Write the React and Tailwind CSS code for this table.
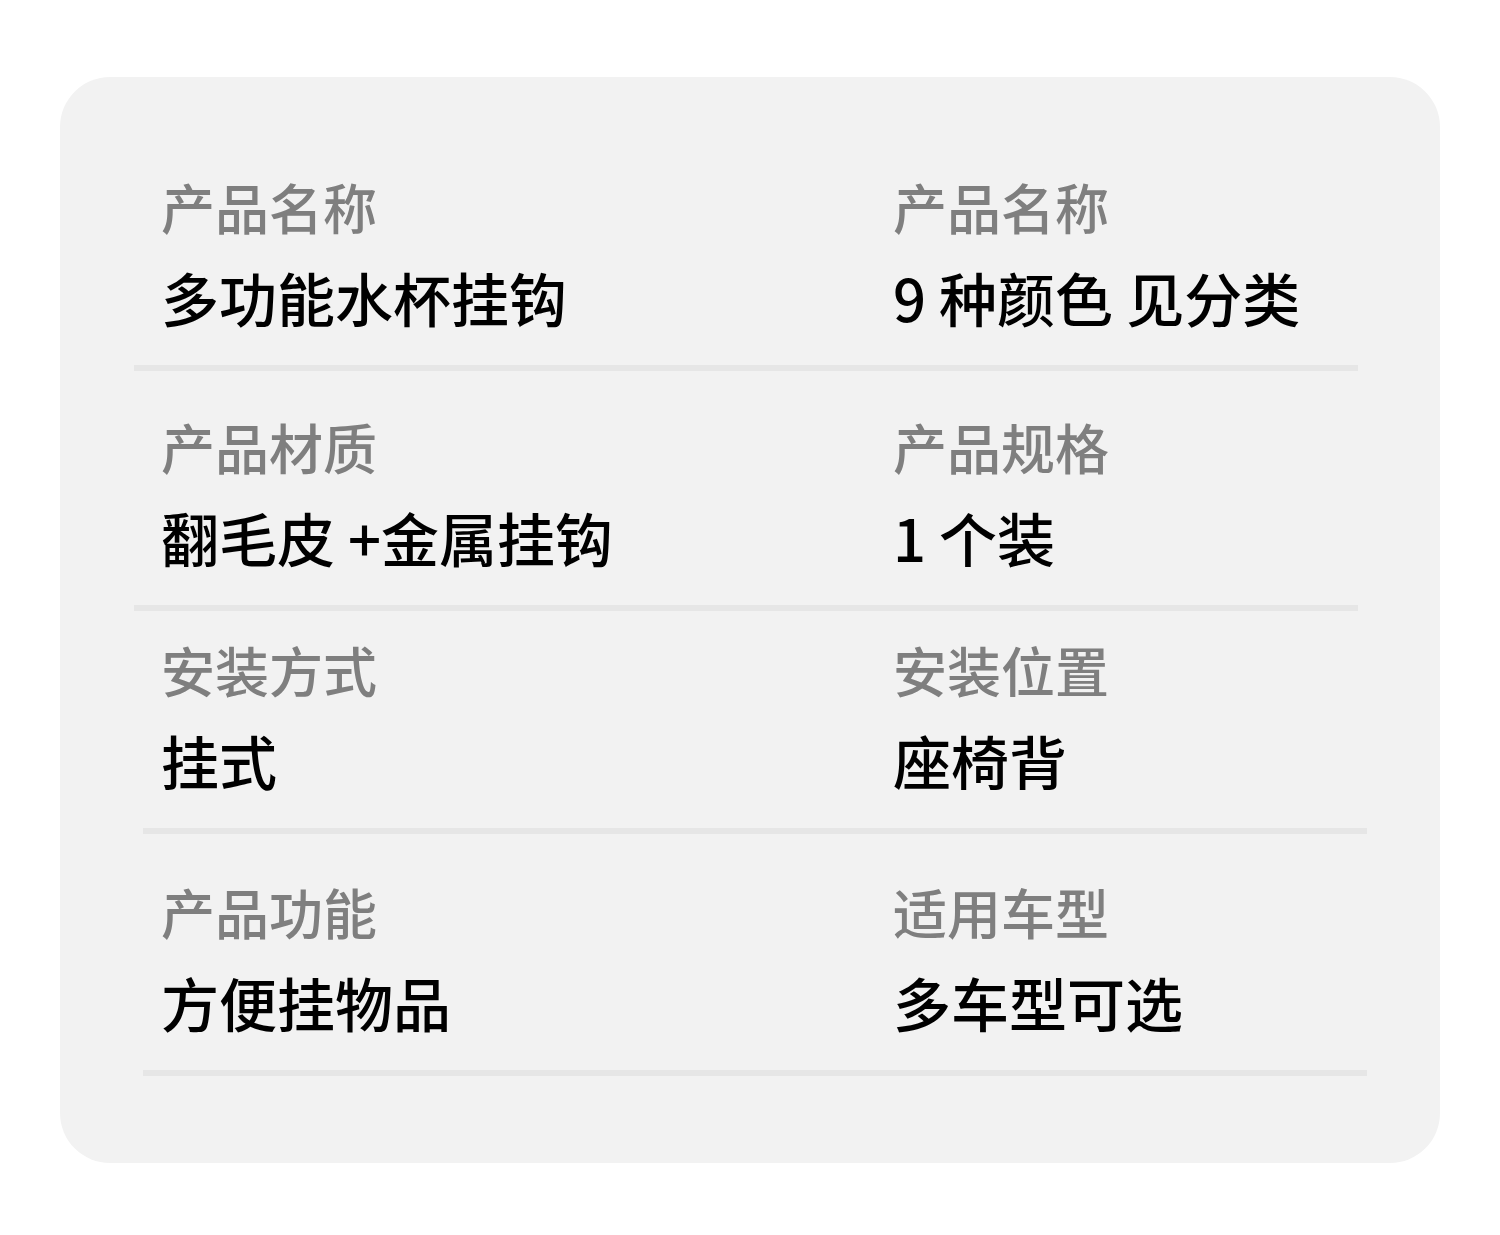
export default function App() {
  const rows = [
    { a: ["产品名称", "多功能水杯挂钩"], b: ["产品名称", "9 种颜色 见分类"], shift: false, mt: "mt-0" },
    { a: ["产品材质", "翻毛皮 +金属挂钩"], b: ["产品规格", "1 个装"], shift: false, mt: "mt-[46px]" },
    { a: ["安装方式", "挂式"], b: ["安装位置", "座椅背"], shift: true, mt: "mt-[29px]" },
    { a: ["产品功能", "方便挂物品"], b: ["适用车型", "多车型可选"], shift: true, mt: "mt-[48px]" },
  ];
  const font = { fontFamily: '"Noto Sans CJK SC", "Noto Sans", sans-serif' };
  return (
    <div className="w-[1500px] h-[1235px] bg-white pt-[77px] pl-[60px]" style={font}>
      <div className="w-[1380px] h-[1086px] bg-[#f2f2f2] rounded-[50px] pt-[100px]">
        {rows.map((r, i) => (
          <div key={i} className={`${r.mt} ${r.shift ? "ml-[83px] pl-[18px]" : "ml-[74px] pl-[27px]"} w-[1224px]`}>
            <div className="grid grid-cols-[732px_1fr]">
              {[r.a, r.b].map((c, j) => (
                <div key={j} className="flex flex-col">
                  <div className="text-[54px] leading-[60px] text-[#7f7f7f] font-medium whitespace-nowrap">{c[0]}</div>
                  <div className="mt-[25px] text-[58px] leading-[70px] text-black font-medium whitespace-nowrap">{c[1]}</div>
                </div>
              ))}
            </div>
            <div className={`mt-[33px] h-[6px] bg-[#e6e6e6] ${r.shift ? "-ml-[18px]" : "-ml-[27px]"}`} />
          </div>
        ))}
      </div>
    </div>
  );
}
